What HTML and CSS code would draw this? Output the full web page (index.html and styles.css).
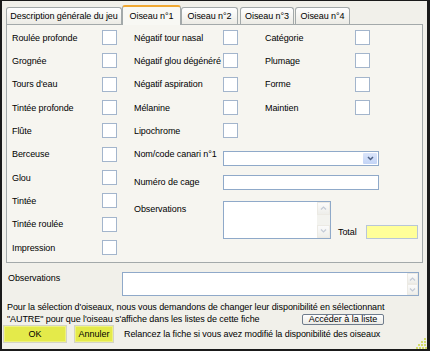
FILE: index.html
```html
<!DOCTYPE html>
<html lang="fr">
<head>
<meta charset="utf-8">
<title>Oiseau n°1</title>
<link rel="stylesheet" href="styles.css">
</head>
<body>
<div class="win">
  <div class="tabs">
    <div class="tab t-desc">Description générale du jeu</div>
    <div class="tab active t-o1">Oiseau n°1</div>
    <div class="tab t-o2">Oiseau n°2</div>
    <div class="tab t-o3">Oiseau n°3</div>
    <div class="tab t-o4">Oiseau n°4</div>
  </div>
  <div class="panel">
    <div class="col-left">
      <div class="row"><span class="lbl">Roulée profonde</span><span class="cb"></span></div>
      <div class="row"><span class="lbl">Grognée</span><span class="cb"></span></div>
      <div class="row"><span class="lbl">Tours d'eau</span><span class="cb"></span></div>
      <div class="row"><span class="lbl">Tintée profonde</span><span class="cb"></span></div>
      <div class="row"><span class="lbl">Flûte</span><span class="cb"></span></div>
      <div class="row"><span class="lbl">Berceuse</span><span class="cb"></span></div>
      <div class="row"><span class="lbl">Glou</span><span class="cb"></span></div>
      <div class="row"><span class="lbl">Tintée</span><span class="cb"></span></div>
      <div class="row"><span class="lbl">Tintée roulée</span><span class="cb"></span></div>
      <div class="row"><span class="lbl">Impression</span><span class="cb"></span></div>
    </div>
    <div class="col-right">
      <div class="cb-grid">
        <span class="lbl">Négatif tour nasal</span><span class="cb"></span><span></span><span class="lbl">Catégorie</span><span class="cb"></span>
        <span class="lbl">Négatif glou dégénéré</span><span class="cb"></span><span></span><span class="lbl">Plumage</span><span class="cb"></span>
        <span class="lbl">Négatif aspiration</span><span class="cb"></span><span></span><span class="lbl">Forme</span><span class="cb"></span>
        <span class="lbl">Mélanine</span><span class="cb"></span><span></span><span class="lbl">Maintien</span><span class="cb"></span>
        <span class="lbl">Lipochrome</span><span class="cb"></span>
      </div>
      <div class="form">
        <div class="frow r-nom">
          <span class="flbl up">Nom/code canari n°1</span>
          <div class="select">
            <span class="sel-btn"><svg width="7" height="5" viewBox="0 0 7 5"><path d="M1 1 L3.5 3.5 L6 1" fill="none" stroke="#4d6185" stroke-width="1.5"/></svg></span>
          </div>
        </div>
        <div class="frow r-cage">
          <span class="flbl">Numéro de cage</span>
          <div class="input wide"></div>
        </div>
        <div class="frow r-obs">
          <span class="flbl obs">Observations</span>
          <div class="textarea small">
            <div class="sb">
              <span class="sb-btn"><svg width="7" height="4" viewBox="0 0 7 4"><path d="M1 3.5 L3.5 1 L6 3.5" fill="none" stroke="#c3cad6" stroke-width="1.2"/></svg></span>
              <span class="sb-track"></span>
              <span class="sb-btn"><svg width="7" height="4" viewBox="0 0 7 4"><path d="M1 0.5 L3.5 3 L6 0.5" fill="none" stroke="#c3cad6" stroke-width="1.2"/></svg></span>
            </div>
          </div>
          <span class="total-lbl">Total</span>
          <div class="input total"></div>
        </div>
      </div>
    </div>
  </div>
  <div class="obs-row">
    <span class="obs-lbl">Observations</span>
    <div class="textarea big">
      <div class="sb">
        <span class="sb-btn"><svg width="7" height="4" viewBox="0 0 7 4"><path d="M1 3.5 L3.5 1 L6 3.5" fill="none" stroke="#c3cad6" stroke-width="1.2"/></svg></span>
        <span class="sb-btn"><svg width="7" height="4" viewBox="0 0 7 4"><path d="M1 0.5 L3.5 3 L6 0.5" fill="none" stroke="#c3cad6" stroke-width="1.2"/></svg></span>
      </div>
    </div>
  </div>
  <div class="notes">
    <p class="line">Pour la sélection d'oiseaux, nous vous demandons de changer leur disponibilité en sélectionnant</p>
    <div class="line l2">
      <span>"AUTRE" pour que l'oiseau s'affiche dans les listes de cette fiche</span>
      <button class="btn-list">Accéder à la liste</button>
    </div>
    <div class="actions">
      <button class="btn-y ok">OK</button>
      <button class="btn-y cancel">Annuler</button>
      <span class="relance">Relancez la fiche si vous avez modifié la disponibilité des oiseaux</span>
    </div>
  </div>
  <svg class="grip" width="11" height="11" viewBox="0 0 11 11">
    <rect x="8" y="0" width="2" height="2" fill="#d3dc6a"/>
    <rect x="5" y="3" width="2" height="2" fill="#d3dc6a"/>
    <rect x="8" y="3" width="2" height="2" fill="#d3dc6a"/>
    <rect x="2" y="6" width="2" height="2" fill="#d3dc6a"/>
    <rect x="5" y="6" width="2" height="2" fill="#d3dc6a"/>
    <rect x="8" y="6" width="2" height="2" fill="#d3dc6a"/>
    <rect x="0" y="9" width="2" height="2" fill="#d3dc6a"/>
    <rect x="3" y="9" width="2" height="2" fill="#d3dc6a"/>
    <rect x="6" y="9" width="2" height="2" fill="#d3dc6a"/>
    <rect x="9" y="9" width="2" height="2" fill="#d3dc6a"/>
  </svg>
</div>
</body>
</html>
```
FILE: styles.css
```css
* { box-sizing: border-box; }
html, body { margin: 0; padding: 0; }
body {
  font-family: "Liberation Sans", Arial, sans-serif;
  font-size: 9px;
  letter-spacing: -0.08px;
  color: #000;
  background: #f1f0ea;
}
.win {
  position: relative;
  width: 430px;
  height: 351px;
  background: #f1f0ea;
  border-top: 1px solid #1a1a1a;
  border-left: 2px solid #1a1a1a;
  border-right: 3px solid #1a1a1a;
  border-bottom: 2px solid #1a1a1a;
  overflow: hidden;
}

/* tabs */
.tabs {
  display: flex;
  align-items: flex-end;
  height: 24px;
  padding-left: 4px;
  position: relative;
  z-index: 2;
}
.tab {
  height: 17px;
  line-height: 16px;
  text-align: center;
  white-space: nowrap;
  border: 1px solid #a3a9aa;
  border-bottom: none;
  border-radius: 3px 3px 0 0;
  background: linear-gradient(#ffffff, #ecebe5);
  margin-bottom: 1px;
}
.t-desc { width: 116px; }
.t-o2 { width: 57px; }
.t-o3 { width: 54px; margin-left: 2px; }
.t-o4 { width: 55px; margin-left: 1px; }
.tab.active {
  width: 59px;
  height: 20px;
  line-height: 18px;
  margin-bottom: 0;
  background: #f8f8f4;
  border-top: 2px solid #f0a832;
  border-color: #f0a832 #a3a9aa #a3a9aa #a3a9aa;
  border-bottom: none;
}

/* panel */
.panel {
  margin-left: 4px;
  width: 417px;
  height: 239px;
  margin-top: -1px;
  border: 1px solid #a3a9aa;
  background: #f6f5f0;
  display: flex;
  padding: 1px 0 0 5px;
}
.col-left {
  width: 105px;
  display: flex;
  flex-direction: column;
}
.row {
  height: 23.33px;
  display: flex;
  align-items: center;
}
.lbl {
  white-space: nowrap;
  display: flex;
  align-items: center;
}
.row .lbl { width: 90px; }
.cb {
  width: 15px;
  height: 15px;
  background: #fff;
  border: 1px solid #a3b5cc;
  align-self: center;
}
.col-right {
  margin-left: 17px;
  display: flex;
  flex-direction: column;
}
.cb-grid {
  display: grid;
  grid-template-columns: 89px 15px 27px 90px 15px;
  grid-auto-rows: 23.33px;
}

/* form */
.form { margin-top: 8px; }
.frow { display: flex; align-items: flex-start; }
.flbl { width: 89px; line-height: 15px; white-space: nowrap; }
.flbl.up { margin-top: -4px; }
.flbl.obs { margin-top: 1px; }
.r-cage { margin-top: 9px; }
.r-obs { margin-top: 11px; }
.select {
  width: 156px;
  height: 15px;
  background: #fff;
  border: 1px solid #8fa9c9;
  display: flex;
  justify-content: flex-end;
  padding: 1px;
}
.sel-btn {
  width: 14px;
  height: 11px;
  background: linear-gradient(#dbe5fa, #c3d4f6);
  border-radius: 1px;
  display: flex;
  align-items: center;
  justify-content: center;
}
.input {
  height: 15px;
  background: #fff;
  border: 1px solid #8fa9c9;
}
.input.wide { width: 156px; }
.textarea {
  background: #fff;
  border: 1px solid #8fa9c9;
  display: flex;
  justify-content: flex-end;
}
.textarea.small { width: 108px; height: 38px; }
.sb {
  width: 13px;
  display: flex;
  flex-direction: column;
  background: #f3f3ef;
}
.sb-btn {
  height: 13px;
  display: flex;
  align-items: center;
  justify-content: center;
  background: linear-gradient(#fbfbfb, #eeeeea);
  border: 1px solid #eceae4;
}
.sb-track { flex: 1; }
.total-lbl {
  align-self: flex-end;
  margin-left: 7px;
  line-height: 14px;
  width: 28px;
}
.input.total {
  align-self: flex-end;
  width: 52px;
  height: 14px;
  background: #ffff99;
  border-color: #b8c6d8;
}

/* bottom observations */
.obs-row {
  display: flex;
  align-items: flex-start;
  margin-top: 9px;
  padding-left: 6px;
}
.obs-lbl { width: 114px; line-height: 12px; }
.textarea.big { width: 297px; height: 24px; }
.textarea.big .sb { width: 11px; justify-content: space-between; }
.textarea.big .sb-btn { height: 11px; }

/* notes */
.notes { padding-left: 5px; margin-top: 5px; }
.line { margin: 0; line-height: 12px; white-space: nowrap; }
.l2 {
  display: grid;
  grid-template-columns: 295px auto;
  align-items: center;
}
.btn-list {
  width: 82px;
  height: 11px;
  padding: 0;
  font: inherit;
  line-height: 9px;
  color: #000;
  background: linear-gradient(#fefefe, #ecebe6);
  border: 1px solid #6f7c8c;
  border-radius: 2px;
}
.actions {
  display: flex;
  align-items: center;
  margin-top: 0px;
  margin-left: -4px;
}
.btn-y {
  height: 18px;
  padding: 0;
  font: inherit;
  color: #000;
  background: #e4ea4a;
  border: 1px solid #d3d3c6;
  box-shadow: inset 0 0 0 1px #eef27c;
}
.btn-y.ok { width: 64px; }
.btn-y.cancel { width: 40px; margin-left: 7px; }
.relance { margin-left: 10px; white-space: nowrap; }

.grip {
  position: absolute;
  right: 0;
  bottom: 0;
}
```
